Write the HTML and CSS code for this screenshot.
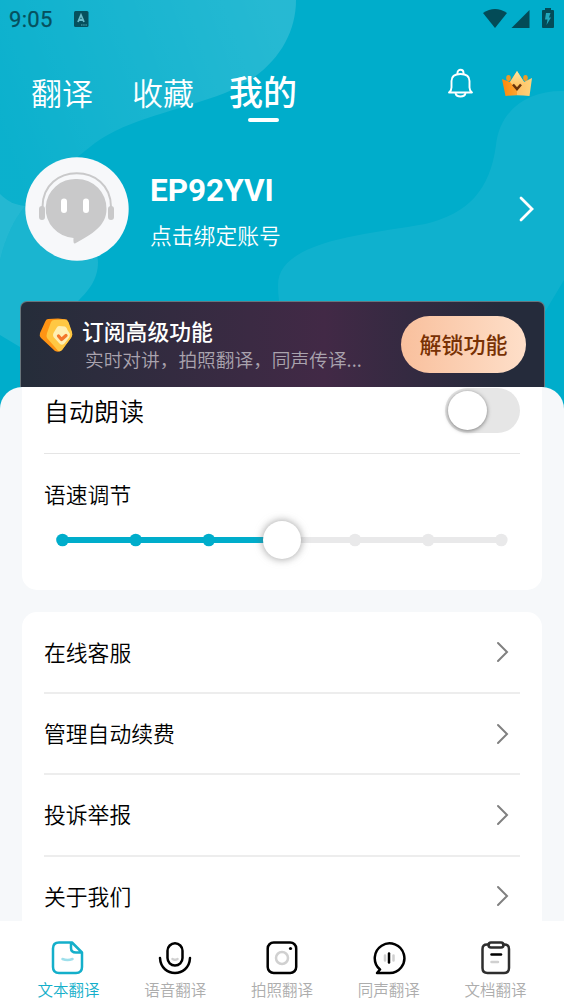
FILE: index.html
```html
<!DOCTYPE html>
<html lang="zh-CN">
<head>
<meta charset="utf-8">
<title>我的</title>
<link rel="stylesheet" href="styles.css">
</head>
<body>
<div class="app">
  <header class="header">
    <svg class="backdrop" width="564" height="420" viewBox="0 0 564 420">
      <defs>
        <linearGradient id="wave" gradientUnits="userSpaceOnUse" x1="0" y1="120" x2="280" y2="20"><stop offset="0" stop-color="#fff" stop-opacity=".045"/><stop offset="1" stop-color="#fff" stop-opacity=".15"/></linearGradient>
      </defs>
      <path d="M0 0H296C296 40 270 75 225 93C175 112 130 118 95 143C70 163 42 185 25 206C15 205 6 200 0 194Z" fill="url(#wave)"/>
      <path d="M0 194C8 202 16 205 25 206C12 222 5 240 0 260Z" fill="#fff" fill-opacity=".14"/>
      <path d="M0 260C5 240 12 222 25 206C60 215 97 235 98 262C98 280 88 291 77 302L20 347L0 335Z" fill="#fff" fill-opacity=".1"/>
      <path d="M564 91C530 90 500 108 496 145C490 190 468 214 425 224C370 234 278 240 278 285C278 330 300 350 350 387H500L564 280Z" fill="#fff" fill-opacity=".06"/>
    </svg>
    <div class="status">
      <span class="clock">9:05</span>
      <svg class="app-badge" width="15" height="17" viewBox="0 0 15 17"><rect width="14.5" height="16" rx="1.5" fill="#06505d"/><path d="M4 11L7 4L10 11M5 9H9" fill="none" stroke="#69bbc8" stroke-width="1.8"/><path d="M7 14H13" stroke="#3b8c99" stroke-width="1.3" stroke-dasharray="1.5 .7"/></svg>
      <svg class="signals" width="74" height="24" viewBox="0 0 74 24" fill="#034b57"><path d="M1 6Q13 -2 25 6L13 21Z"/><path d="M47.500 3V21H29.500Z"/><path d="M60 4Q60 3 61 3H63V1H69V3H71Q72 3 72 4V20Q72 21 71 21H61Q60 21 60 20Z"/><path d="M64 6H68.500L67 10.500H69L64.500 18L65.500 12.500H63Z" fill="#20a9bd"/></svg>
    </div>
    <nav class="tabs">
      <a class="tab">翻译</a>
      <a class="tab">收藏</a>
      <a class="tab active">我的</a>
      <span class="actions">
        <svg width="28" height="32" viewBox="0 0 28 32" fill="none" stroke="#fff" stroke-width="1.9" stroke-linejoin="round"><path d="M2 24.500Q4.500 22.500 4.500 19.500V13Q4.500 6 13.500 6T22.500 13V19.500Q22.500 22.500 25 24.500Z"/><path d="M10.500 6V4.800A3 3 0 0 1 16.500 4.800V6M8.500 25Q9 28.500 13.500 28.500T18.500 25"/></svg>
        <svg width="32" height="30" viewBox="0 0 32 30"><defs><linearGradient id="crown"><stop offset="0" stop-color="#ff8707"/><stop offset=".5" stop-color="#ffa532"/><stop offset=".51" stop-color="#ffc166"/><stop offset="1" stop-color="#ffd27a"/></linearGradient><linearGradient id="crest" x2="0" y2="1"><stop stop-color="#ffe7a3"/><stop offset="1" stop-color="#ffba50"/></linearGradient></defs><ellipse cx="7.500" cy="10" rx="2.300" ry="3" fill="#ee9a26"/><ellipse cx="24.500" cy="10" rx="2.300" ry="3" fill="#ee9a26"/><path d="M1 11L9 14L16 3L23 14L31 10L28.500 28Q16 26.500 4.500 28Z" fill="url(#crown)"/><path d="M16 3L9 14L16 22L23 14Z" fill="url(#crest)"/><path d="M12 16.500L16 21L20 16.500" fill="none" stroke="#69330c" stroke-width="2.500"/></svg>
      </span>
    </nav>
    <section class="profile">
      <svg class="avatar" width="104" height="104" viewBox="0 0 104 104"><circle cx="52" cy="52" r="51.700" fill="#f7f8fa"/><path d="M17.500 50C17.500 5 86 5 86 50" fill="none" stroke="#c9c9ca" stroke-width="2"/><rect x="14" y="49" width="6" height="14" rx="3" fill="#c9c9ca"/><rect x="83" y="49" width="6" height="14" rx="3" fill="#c9c9ca"/><path d="M52 22A29.500 29.500 0 0 1 81.500 52C81.500 69 67 77 50 86.500Q48 87 48.500 81A29.500 29.500 0 0 1 52 22Z" fill="#c9c9ca"/><rect x="36" y="41.500" width="6" height="14.500" rx="3" fill="#fff"/><rect x="58" y="41.500" width="6" height="14.500" rx="3" fill="#fff"/></svg>
      <div class="identity"><div class="user">EP92YVI</div><div class="bind">点击绑定账号</div></div>
      <svg class="enter" width="18" height="28" viewBox="0 0 18 28"><path d="M3 3L14 14L3 25" fill="none" stroke="#fff" stroke-width="2.800" stroke-linecap="round"/></svg>
    </section>
    <section class="promo">
      <svg class="gem" width="34" height="36" viewBox="0 0 34 36"><path d="M9 1L19 .5L28 1.500L33 15Q34 18 31 21L23 32Q20 35 16 33L2 20Q0 18 1 15L6 4Q7 1 9 1Z" fill="#ff9414"/><path d="M15 2L26 1.500Q28.500 2 29.500 4L33 14Q34 17 32 20L23 32Q20 35 17.500 31L8 20Q7 18 8 15L12 4Q13 2 15 2Z" fill="#ffc843"/><path d="M20 8L26 8.500Q28 9.500 28.500 12L31 16Q31 19 29 21L25 26Q22 28 20 25L14.500 19Q13.500 17 14.500 15L17.500 10Q18.500 8 20 8Z" fill="#ffefb3"/><path d="M19.500 18L22.500 21.500L27 17.500" fill="none" stroke="#f4762b" stroke-width="3.300" stroke-linecap="round" stroke-linejoin="round"/></svg>
      <div class="promo-copy"><div class="promo-title">订阅高级功能</div><div class="promo-desc">实时对讲，拍照翻译，同声传译...</div></div>
      <button class="unlock">解锁功能</button>
    </section>
  </header>
  <main class="sheet">
    <section class="card speech">
      <div class="read"><span>自动朗读</span><span class="switch"><i class="knob"></i></span></div>
      <div class="speed">语速调节</div>
      <svg class="slider" width="476" height="56" viewBox="0 0 476 56"><path d="M238 28H457" stroke="#e9e9ea" stroke-width="6"/><path d="M18.500 28H238" stroke="#00adcb" stroke-width="6"/><g fill="#00adcb"><circle cx="18.500" cy="28" r="6.300"/><circle cx="91.700" cy="28" r="6.300"/><circle cx="164.800" cy="28" r="6.300"/></g><g fill="#e9e9ea"><circle cx="311" cy="28" r="6.300"/><circle cx="384.200" cy="28" r="6.300"/><circle cx="457.300" cy="28" r="6.300"/></g><circle class="thumb" cx="238" cy="28" r="19" fill="#fff"/></svg>
    </section>
    <section class="card menu">
      <div class="item"><span>在线客服</span><svg width="16" height="24" viewBox="0 0 16 24"><path d="M3 3L12 12L3 21"/></svg></div>
      <div class="item"><span>管理自动续费</span><svg width="16" height="24" viewBox="0 0 16 24"><path d="M3 3L12 12L3 21"/></svg></div>
      <div class="item"><span>投诉举报</span><svg width="16" height="24" viewBox="0 0 16 24"><path d="M3 3L12 12L3 21"/></svg></div>
      <div class="item"><span>关于我们</span><svg width="16" height="24" viewBox="0 0 16 24"><path d="M3 3L12 12L3 21"/></svg></div>
    </section>
  </main>
  <footer class="dock">
    <div class="dock-item current"><svg width="36" height="36" viewBox="0 0 36 36"><path d="M22 2.500H9Q3 2.500 3 8.500V27Q3 33 9 33H26Q32 33 32 27V12.500ZM21 2.500V8Q21 12.500 26 12.500H32"/><path class="faint" d="M12.500 19Q17.500 21 22.500 19"/></svg>文本翻译</div>
    <div class="dock-item"><svg width="36" height="36" viewBox="0 0 36 36"><rect x="10.500" y="3.300" width="15" height="22.300" rx="7.500"/><path d="M3 18C4 38 32 38 33 18"/><path class="faint" d="M15.500 19Q18 20.500 20.500 19"/></svg>语音翻译</div>
    <div class="dock-item"><svg width="36" height="36" viewBox="0 0 36 36"><rect x="3.700" y="2.500" width="28.500" height="30.500" rx="6"/><circle class="faint" cx="18" cy="18" r="6"/><circle class="dot" cx="26.500" cy="8.500" r="1.600"/></svg>拍照翻译</div>
    <div class="dock-item"><svg width="36" height="36" viewBox="0 0 36 36"><path d="M6 33L9 29.500A14.800 14.800 0 1 1 18 33Z"/><path d="M18 13.500V22.500"/><path class="faint" d="M14 15.500V20.500M22.500 15.500V20.500"/></svg>同声翻译</div>
    <div class="dock-item doc"><svg width="36" height="36" viewBox="0 0 36 36"><path d="M11 4.500H9Q4.500 4.500 4.500 9V28Q4.500 33 9.500 33H26Q31 33 31 28V9Q31 4.500 26.500 4.500H25"/><rect x="10.500" y="2.500" width="15" height="5" rx="2.500"/><path class="line" d="M13.500 14.500H23"/><path class="faint" d="M13.500 22H20"/></svg>文档翻译</div>
  </footer>
</div>
</body>
</html>
```
FILE: styles.css
```css
* { box-sizing: border-box; }
body { margin: 0; font-family: "Noto Sans CJK SC", sans-serif; font-weight: 350; color: #000; }
svg { display: block; flex: none; }
.app { width: 564px; height: 1004px; display: flex; flex-direction: column; overflow: hidden; background: #00adcb; }
.header { position: relative; height: 387px; flex: none; color: #fff; }
.backdrop { position: absolute; left: 0; top: 0; }
.status, .tabs, .profile, .promo { position: relative; display: flex; }
.status { height: 40px; padding: 7px 8px 0 9px; align-items: flex-start; }
.clock { width: 65px; font: 400 22px/26px Roboto, sans-serif; color: #06505d; letter-spacing: .3px; -webkit-text-stroke: .25px #06505d; }
.app-badge { margin-top: 4px; }
.signals { margin-left: auto; }
.tabs { height: 90px; padding: 0 31px 0 31px; }
.tab { height: 90px; width: 101px; font-size: 31px; line-height: 45px; padding-top: 29px; white-space: nowrap; }
.tab.active { position: relative; width: 68px; margin-left: -4px; font-size: 34px; font-weight: 500; padding-top: 28px; }
.tab.active::after { content: ""; position: absolute; left: 19px; top: 78px; width: 31px; height: 4px; border-radius: 2px; background: #fff; }
.actions { display: flex; gap: 26px; margin: 28px 0 0 auto; }
.profile { height: 172px; padding: 27px 28px 0 25px; align-items: flex-start; }
.identity { padding-left: 21px; }
.user { margin-top: 13px; font: 700 31.500px/42px Roboto, sans-serif; }
.bind { margin-top: 7px; font-size: 21.800px; line-height: 32px; }
.enter { margin: 38px 0 0 auto; }
.promo { margin: 0 19.500px; padding: 0 17.500px 0 18.500px; border: 1px solid #68767d; border-bottom: 0; border-radius: 7px 7px 0 0; background: linear-gradient(90deg, #252d3a, #422946 58%, #252b3b 92%); }
.header .promo { margin-top: -1px; height: 86px; }
.gem { margin-top: 16px; }
.promo-copy { margin: 13px 0 0 9px; width: 319px; white-space: nowrap; }
.promo-title { font-size: 21.800px; font-weight: 500; line-height: 32px; }
.promo-desc { padding-left: 3px; color: #aaa3ae; font-size: 18.700px; line-height: 24px; }
.unlock { flex: none; width: 125px; height: 57px; margin: 14px 0 0 1px; padding: 0 0 2px; border: 0; border-radius: 29px; background: linear-gradient(90deg, #f9c09d, #fedfc9); color: #783104; font: 500 22px/55px "Noto Sans CJK SC", sans-serif; }
.sheet { height: 534px; flex: none; padding: 0 22px; overflow: hidden; background: #f6f8fa; border-radius: 22px 22px 0 0; }
.card { background: #fff; padding: 0 22px; }
.speech { height: 203px; border-radius: 0 0 15px 15px; }
.read { height: 67px; display: flex; justify-content: space-between; align-items: flex-start; border-bottom: 1px solid #e5e5e5; font-size: 25px; line-height: 47px; }
.switch { width: 75px; height: 45px; margin-top: 1px; padding: 3px; border-radius: 23px; background: #e6e6e6; }
.knob { display: block; width: 39px; height: 39px; border-radius: 50%; background: #fff; box-shadow: 0 1px 4px #777; }
.speed { height: 58px; font-size: 21.800px; line-height: 79px; }
.slider { overflow: visible; }
.thumb { filter: drop-shadow(0 0 4px #666a); }
.menu { height: 340px; margin-top: 22px; border-radius: 15px; }
.item { height: 81.300px; display: flex; align-items: center; justify-content: space-between; border-bottom: 2px solid #ededed; padding-right: 9px; font-size: 21.800px; }
.item:first-child { height: 82px; }
.item span { padding-bottom: 2px; }
.item svg { fill: none; stroke: #808080; stroke-width: 2; stroke-linecap: round; }
.dock { height: 83px; flex: none; padding: 19px 15px 0 15px; display: grid; grid-template-columns: repeat(5, 1fr); background: #fff; }
.dock-item { display: flex; flex-direction: column; align-items: center; color: #adadad; font-size: 15.500px; line-height: 27px; }
.dock-item svg { fill: none; stroke: #000; stroke-width: 2.500; stroke-linejoin: round; stroke-linecap: round; }
.dock-item .faint { stroke: #d0d0d0; }
.dock-item .dot { fill: #000; stroke: none; }
.current { color: #14afca; }
.current svg { stroke: #14afca; }
.current .faint { stroke: #9edfeb; }
.doc svg { stroke: #2e2e2e; }
.doc .line { stroke: #000; }
```
